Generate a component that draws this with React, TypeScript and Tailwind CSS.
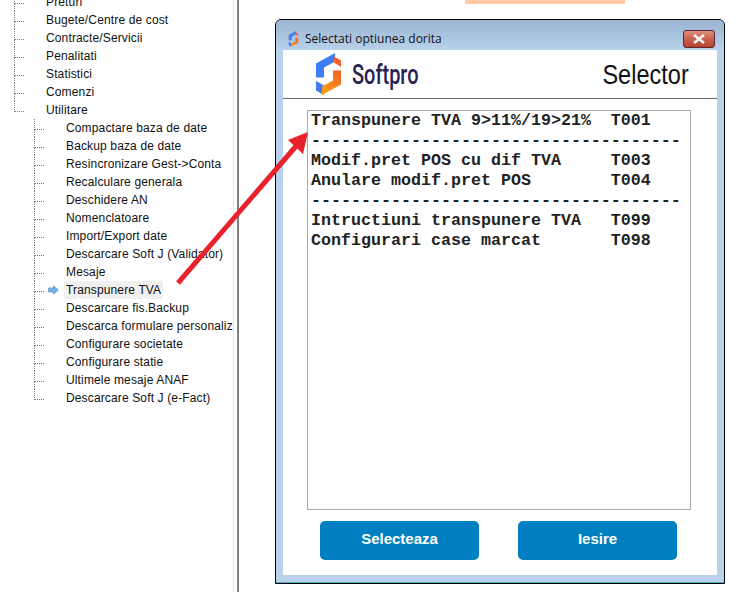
const topItems = ['Preturi', 'Bugete/Centre de cost', 'Contracte/Servicii', 'Penalitati', 'Statistici', 'Comenzi', 'Utilitare'];

const subItems = [
  'Compactare baza de date',
  'Backup baza de date',
  'Resincronizare Gest->Conta',
  'Recalculare generala',
  'Deschidere AN',
  'Nomenclatoare',
  'Import/Export date',
  'Descarcare Soft J (Validator)',
  'Mesaje',
  'Transpunere TVA',
  'Descarcare fis.Backup',
  'Descarca formulare personalizate',
  'Configurare societate',
  'Configurare statie',
  'Ultimele mesaje ANAF',
  'Descarcare Soft J (e-Fact)',
];

const lines = [
  'Transpunere TVA 9>11%/19>21%  T001',
  '-------------------------------------',
  'Modif.pret POS cu dif TVA     T003',
  'Anulare modif.pret POS        T004',
  '-------------------------------------',
  'Intructiuni transpunere TVA   T099',
  'Configurari case marcat       T098',
];

function Connector({ last }: { last: boolean }) {
  return (
    <div className="w-[10px] shrink-0">
      <div className="h-[11px] border-l border-b border-dotted border-[#7a7a7a]" />
      {!last && <div className="h-[7px] border-l border-dotted border-[#7a7a7a]" />}
    </div>
  );
}

function LogoMark({ className }: { className: string }) {
  return (
    <svg viewBox="0 0 27 42" className={className}>
      <defs>
        <linearGradient id="logoOrange" x1="0.9" y1="0" x2="0.2" y2="1">
          <stop offset="0" stopColor="#f2622a" />
          <stop offset="1" stopColor="#fba119" />
        </linearGradient>
      </defs>
      <path d="M20 0 L1 10.5 V24.5 H9 L9 14.5 L20 8.5 Z" fill="#3f7df6" />
      <path d="M1 28 L9 32.5 V42 L1 37.5 Z" fill="#3f7df6" />
      <path d="M7 42 L26 31.5 V17.5 H18 V27.5 L7 33.5 Z" fill="url(#logoOrange)" />
      <path d="M26 14 L19 9.5 V3.5 L26 7.5 Z" fill="#f2622a" />
    </svg>
  );
}

function Tree() {
  return (
    <aside className="w-[234px] shrink-0 h-full overflow-hidden border-r border-[#e6e6e6] font-['Liberation_Sans',Arial,sans-serif] text-[12px] tracking-[0.14px] text-[#111]">
      <div className="-mt-[7px]">
        {topItems.map((item, i) => (
          <div key={item} className="h-[18px] flex pl-[14px]">
            <Connector last={i === topItems.length - 1} />
            <span className="ml-[22px] leading-[18px] whitespace-nowrap">{item}</span>
          </div>
        ))}
        {subItems.map((item, i) => {
          const active = item === 'Transpunere TVA';
          return (
            <div key={item} className="h-[18px] flex pl-[34px]">
              <Connector last={i === subItems.length - 1} />
              <div className="w-[20px] shrink-0 flex items-center pl-[4px]">
                {active && (
                  <svg viewBox="0 0 11 10" className="w-[11px] h-[10px]">
                    <path d="M0.5 3 H5.5 V0.7 L10.3 5 L5.5 9.3 V7 H0.5 Z" fill="#72b4ea" stroke="#5d93c4" strokeWidth="0.7" />
                  </svg>
                )}
              </div>
              <span className={`px-[2px] leading-[18px] whitespace-nowrap ${active ? 'bg-[#f0f0f0]' : ''}`}>{item}</span>
            </div>
          );
        })}
      </div>
    </aside>
  );
}

function SelectorWindow() {
  return (
    <div className="mt-[15px] ml-[36px] w-[450px] h-[565px] flex flex-col rounded-t-[6px] border border-black bg-[#b9d1ea] overflow-hidden">
      {/* Title bar */}
      <div className="h-[30px] shrink-0 flex items-center justify-between pl-[12px] pr-[9px] bg-gradient-to-b from-[#9ab5d2] to-[#b9d1ea]">
        <div className="flex items-center gap-[6px] pt-[7px]">
          <LogoMark className="w-[11px] h-[16px]" />
          <span className="font-['Open_Sans',sans-serif] text-[12px] text-[#111]">Selectati optiunea dorita</span>
        </div>
        <div className="mt-[7px] w-[32px] h-[18px] rounded-[3px] border border-[#5b2430] flex items-center justify-center bg-gradient-to-b from-[#dd8f80] via-[#c9614f] to-[#b5402c]">
          <svg viewBox="0 0 14 10" className="w-[14px] h-[10px]">
            <path d="M2 1 L12 9 M12 1 L2 9" stroke="#f2f2f2" strokeWidth="2.6" />
          </svg>
        </div>
      </div>

      {/* Client area */}
      <div className="mx-[7px] h-[525px] shrink-0 bg-white flex flex-col">
        <div className="h-[49px] shrink-0 flex items-center justify-between border-b border-[#666] pl-[32px] pr-[28px]">
          <div className="flex items-center gap-[10px]">
            <LogoMark className="w-[27px] h-[42px]" />
            <span className="mt-[2px] w-[66px] font-['Roboto',sans-serif] font-medium text-[27px] leading-none text-[#2a2352] origin-left scale-x-[0.74]">Softpro</span>
          </div>
          <span className="mt-[1px] font-['Liberation_Sans',Arial,sans-serif] text-[28px] leading-none text-[#111] origin-right scale-x-[0.84]">Selector</span>
        </div>

        <div className="mt-[11px] ml-[24px] w-[384px] h-[400px] shrink-0 border border-[#aaa] pl-[3px] font-['Liberation_Mono','Courier_New',monospace] font-bold text-[16.67px] leading-[20px] text-[#222] whitespace-pre overflow-hidden">
          {lines.map((line, i) => (
            <div key={i}>{line}</div>
          ))}
        </div>

        <div className="mt-[11px] ml-[37px] flex gap-[39px] font-['Liberation_Sans',Arial,sans-serif] font-bold text-[15px] text-white">
          <button className="w-[159px] h-[39px] pb-[2px] rounded-[5px] bg-[#0080c0]">Selecteaza</button>
          <button className="w-[159px] h-[39px] pb-[2px] rounded-[5px] bg-[#0080c0]">Iesire</button>
        </div>
      </div>
      <div className="flex-1 border-b border-[#4fb0c8]" />
    </div>
  );
}

export default function App() {
  return (
    <div className="relative w-[746px] h-[592px] overflow-hidden bg-white flex">
      <Tree />
      <div className="w-[3px] shrink-0" />
      <div className="w-[2px] shrink-0 bg-[#808080]" />
      <div className="flex-1">
        <div className="ml-[226px] w-[160px] h-[4px] bg-[#fdc8a4]" />
        <SelectorWindow />
      </div>

      {/* Annotation arrow */}
      <svg className="absolute left-0 top-0 w-[746px] h-[592px] pointer-events-none" viewBox="0 0 746 592">
        <path d="M178 283 L297 145" stroke="#e8222a" strokeWidth="5" fill="none" />
        <path d="M308 132 L288 140 L303 154 Z" fill="#e8222a" />
      </svg>
    </div>
  );
}
